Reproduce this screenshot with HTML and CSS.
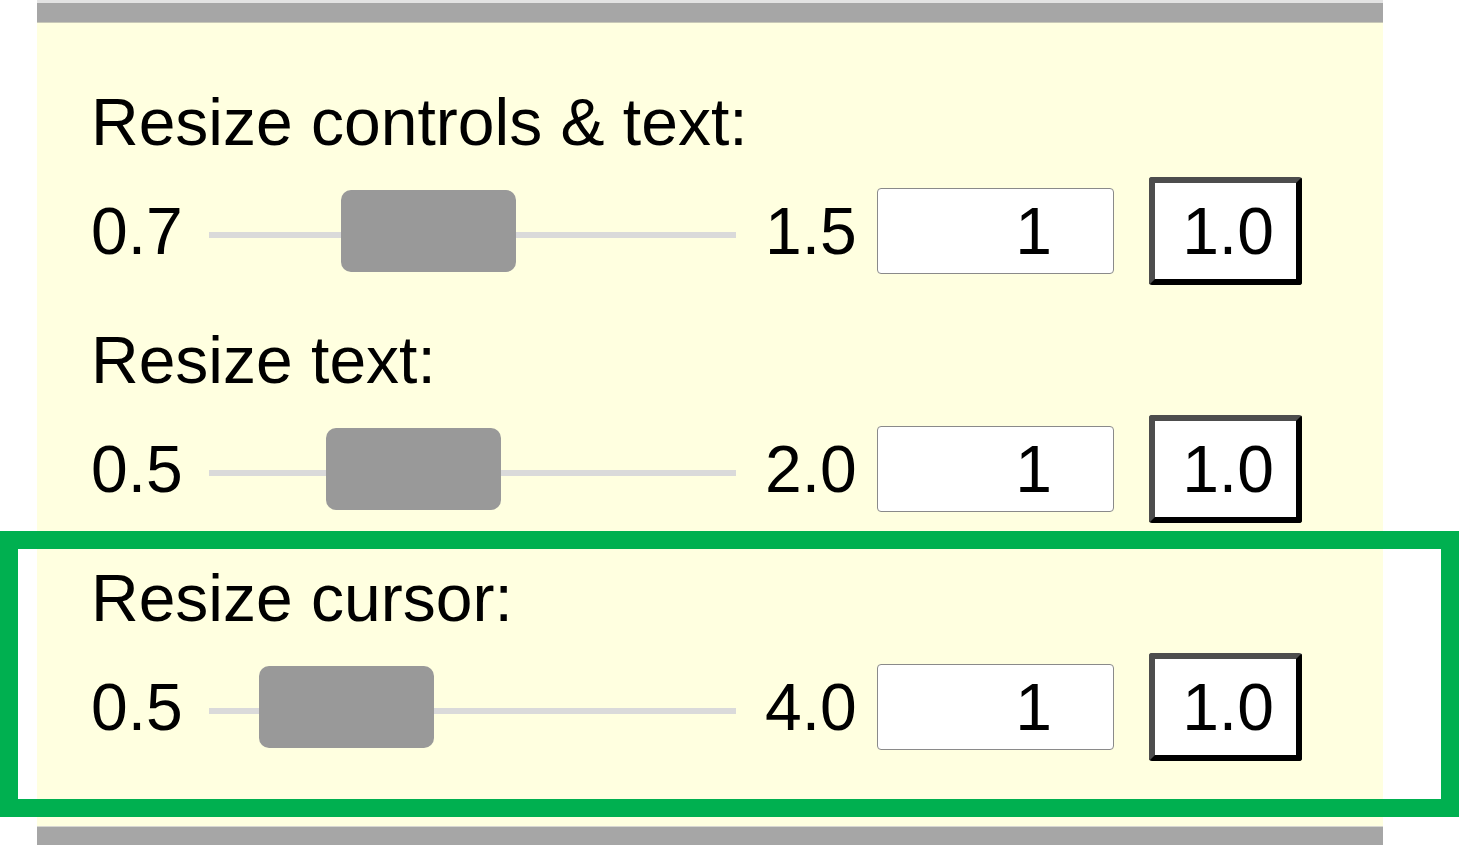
FILE: index.html
```html
<!DOCTYPE html>
<html lang="en">
<head>
    <meta charset="UTF-8">
    <meta name="viewport" content="width=device-width, initial-scale=1.0">
    <title>Resize Settings</title>
    <link rel="stylesheet" href="styles.css">
</head>
<body>
    <div class="panel">
        <div class="bar bar-top"></div>

        <div class="settings">
            <!-- Controls & text -->
            <div class="group">
                <label class="group-label" for="controlsRange">Resize controls &amp; text:</label>
                <div class="row">
                    <span class="min">0.7</span>
                    <input type="range" id="controlsRange" min="0.7" max="1.5" step="0.1" value="1">
                    <span class="max">1.5</span>
                    <input type="number" class="num" value="1">
                    <output class="out">1.0</output>
                </div>
            </div>

            <!-- Text only -->
            <div class="group">
                <label class="group-label" for="textRange">Resize text:</label>
                <div class="row">
                    <span class="min">0.5</span>
                    <input type="range" id="textRange" min="0.5" max="2.0" step="0.1" value="1">
                    <span class="max">2.0</span>
                    <input type="number" class="num" value="1">
                    <output class="out">1.0</output>
                </div>
            </div>

            <!-- Cursor -->
            <div class="group">
                <label class="group-label" for="cursorRange">Resize cursor:</label>
                <div class="row">
                    <span class="min">0.5</span>
                    <input type="range" id="cursorRange" min="0.5" max="4.0" step="0.1" value="1">
                    <span class="max">4.0</span>
                    <input type="number" class="num" value="1">
                    <output class="out">1.0</output>
                </div>
            </div>
        </div>

        <div class="bar bar-bottom"></div>
    </div>

    <!-- highlight around the cursor setting -->
    <div class="highlight"></div>
</body>
</html>
```

FILE: styles.css
```css
body {
    margin: 0;
    background: #fff;
    font-family: "Liberation Sans", Arial, sans-serif;
    color: #000;
    position: relative;
    height: 845px;
    overflow: hidden;
}

.panel {
    margin-left: 37px;
    width: 1346px;
    background-color: #ffffe0;
}

.bar {
    background: #a6a6a6;
}

.bar-top {
    height: 19px;
    border-top: 3px solid #e2e2e2;
    border-bottom: 1px solid #c8c8b8;
}

.bar-bottom {
    height: 30px;
    border-top: 1px solid #d6d6d0;
}

.settings {
    padding: 61px 0 65px 54px;
}

.group {
    display: flex;
    flex-direction: column;
    margin-bottom: 37px;
}

.group:last-child {
    margin-bottom: 0;
}

.group-label {
    font-size: 66px;
    line-height: 76px;
    margin-bottom: 17px;
}

.row {
    display: flex;
    align-items: center;
    height: 108px;
    font-size: 66px;
    line-height: 76px;
}

.min {
    width: 118px;
}

.max {
    width: 112px;
    margin-left: 29px;
}

input[type="range"] {
    -webkit-appearance: none;
    appearance: none;
    width: 527px;
    height: 82px;
    margin: 8px 0 0;
    background: transparent;
}

input[type="range"]::-webkit-slider-runnable-track {
    height: 6px;
    background: #dadada;
}

input[type="range"]::-webkit-slider-thumb {
    -webkit-appearance: none;
    appearance: none;
    width: 175px;
    height: 82px;
    margin-top: -42px;
    border: none;
    border-radius: 10px;
    background: #999;
}

.num {
    box-sizing: border-box;
    width: 237px;
    height: 86px;
    margin: 0;
    padding: 0 61px 0 0;
    border: 1px solid #8a8a8a;
    border-radius: 4px;
    background: #fff;
    font-family: inherit;
    font-size: 66px;
    text-align: right;
    -moz-appearance: textfield;
}

.num::-webkit-inner-spin-button,
.num::-webkit-outer-spin-button {
    -webkit-appearance: none;
    margin: 0;
}

.out {
    box-sizing: border-box;
    width: 153px;
    height: 108px;
    margin-left: 35px;
    display: flex;
    align-items: center;
    justify-content: center;
    border: 6px solid;
    border-color: #4d4d4d #000 #000 #4d4d4d;
    border-radius: 3px;
    background: #fff;
    padding-left: 5px;
}

.highlight {
    position: absolute;
    left: 0;
    top: 531px;
    width: 1459px;
    height: 286px;
    box-sizing: border-box;
    border: 18px solid #00b050;
}
```
